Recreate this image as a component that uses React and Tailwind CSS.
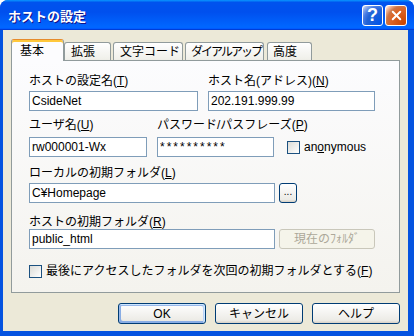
import { X } from "lucide-react";

const FONT = "font-['Liberation_Sans','Noto_Sans_CJK_JP',sans-serif]";

function Mn({ children }) {
  return <span className="underline underline-offset-[1px]">{children}</span>;
}

function TextBox({ value, className = "" }) {
  return (
    <input
      readOnly
      value={value}
      className={`h-[20px] border border-[#7f9db9] bg-white px-[2px] text-[12px] text-black outline-none ${className}`}
    />
  );
}

function CheckBox() {
  return (
    <span className="block h-[13px] w-[13px] shrink-0 border border-[#1c5180] bg-[linear-gradient(135deg,#dcdcd7,#ffffff)]" />
  );
}

function Tab({ label, active, className = "" }) {
  if (active) {
    return (
      <div
        className={`relative z-10 -mb-px flex h-[22px] items-center whitespace-nowrap rounded-t-[3px] border border-b-0 border-[#919b9c] border-t-[#e68b2c] bg-[#fcfcfe] pl-[8px] pt-[1px] text-[12px] shadow-[inset_0_2px_#ffc83c] ${className}`}
      >
        {label}
      </div>
    );
  }
  return (
    <div
      className={`flex h-[18px] items-center overflow-hidden whitespace-nowrap rounded-t-[3px] border border-b-0 border-[#919b9c] bg-[linear-gradient(180deg,#ffffff,#fafaf9_26%,#f0f0ea_95%,#ecebe6)] text-[12px] ${className}`}
    >
      {label}
    </div>
  );
}

function Button({ children, primary, className = "" }) {
  return (
    <button
      className={`flex h-[21px] w-[88px] items-center justify-center rounded-[3px] border border-[#003c74] bg-[linear-gradient(180deg,#ffffff,#ecebe6_86%,#d6d0c5)] text-[12px] text-black ${
        primary
          ? "shadow-[inset_-1px_1px_#cee7ff,inset_1px_2px_#98b8ea,inset_-2px_2px_#bcd4f6,inset_1px_-1px_#89ade4,inset_2px_-2px_#89ade4]"
          : ""
      } ${className}`}
    >
      {children}
    </button>
  );
}

export default function App() {
  return (
    <div className={`h-[336px] w-[414px] overflow-hidden bg-white ${FONT}`}>
      <div className="flex h-full flex-col overflow-hidden rounded-t-[8px] bg-[#0553e0]">
        {/* title bar */}
        <div className="flex h-[30px] shrink-0 items-center bg-[linear-gradient(180deg,#0997ff,#0053ee_8%,#0050ee_40%,#0066ff_88%,#0066ff_93%,#005bff_95%,#003dd7_96%,#003dd7)] pl-[8px] pr-[7px]">
          <span className="font-['Noto_Sans_CJK_JP',sans-serif] text-[13px] font-bold leading-none text-white [text-shadow:1px_1px_#0f1089]">
            ホストの設定
          </span>
          <div className="ml-auto flex gap-[2px]">
            <div className="flex h-[21px] w-[21px] items-center justify-center rounded-[3px] border border-white bg-[radial-gradient(circle_at_90%_90%,#0054e9_0%,#2263d5_55%,#4479e4_70%,#a3bbec_90%,#ffffff_100%)] font-['Liberation_Sans',sans-serif] text-[18px] font-bold leading-none text-white">
              ?
            </div>
            <div className="flex h-[21px] w-[22px] items-center justify-center rounded-[3px] border border-white bg-[radial-gradient(circle_at_90%_90%,#cc4600_0%,#dc6527_55%,#cd7546_70%,#ffccb2_90%,#ffffff_100%)]">
              <X className="h-[15px] w-[15px] text-white" strokeWidth={3.2} />
            </div>
          </div>
        </div>

        {/* frame */}
        <div className="flex flex-1 pb-[5px] pl-[3px] pr-[6px]">
          <div className="flex flex-1 flex-col bg-[#ece9d8] text-black">
            {/* tab strip */}
            <div className="flex h-[30px] shrink-0 items-end pl-[8px]">
              <Tab label="基本" active className="w-[53px]" />
              <Tab label="拡張" className="w-[47px] pl-[6px]" />
              <Tab label="文字コード" className="ml-[2px] w-[70px] pl-[6px]" />
              <Tab label="ダイアルアップ" className="ml-[2px] w-[79px] pl-[5px] tracking-[-2px]" />
              <Tab label="高度" className="ml-[3px] w-[45px] pl-[5px]" />
            </div>

            {/* tab page */}
            <div className="mx-[8px] h-[233px] shrink-0 border border-[#919b9c] bg-[linear-gradient(180deg,#fcfcfe,#f4f3ee)] pl-[17px] pt-[13px] text-[12px] leading-[14px]">
              <div className="flex gap-[10px]">
                <div className="flex w-[169px] flex-col">
                  <span className="whitespace-nowrap">
                    ホストの設定名(<Mn>T</Mn>)
                  </span>
                  <TextBox value="CsideNet" className="mt-[3px] w-full" />
                </div>
                <div className="flex w-[167px] flex-col">
                  <span className="whitespace-nowrap">
                    ホスト名(アドレス)(<Mn>N</Mn>)
                  </span>
                  <TextBox value="202.191.999.99" className="mt-[3px] w-full" />
                </div>
              </div>

              <div className="mt-[7px] flex">
                <div className="flex w-[118px] flex-col">
                  <span className="whitespace-nowrap">
                    ユーザ名(<Mn>U</Mn>)
                  </span>
                  <TextBox value="rw000001-Wx" className="mt-[5px] w-full" />
                </div>
                <div className="ml-[10px] flex w-[117px] flex-col">
                  <span className="whitespace-nowrap">
                    パスワード/パスフレーズ(<Mn>P</Mn>)
                  </span>
                  <TextBox value="**********" className="mt-[5px] w-full tracking-[2px]" />
                </div>
                <div className="ml-[13px] flex h-[20px] items-center self-end">
                  <CheckBox />
                  <span className="ml-[4px]">
                    an<Mn>o</Mn>nymous
                  </span>
                </div>
              </div>

              <div className="mt-[9px] flex flex-col">
                <span className="whitespace-nowrap">
                  ローカルの初期フォルダ(<Mn>L</Mn>)
                </span>
                <div className="mt-[3px] flex">
                  <TextBox value="C¥Homepage" className="w-[246px]" />
                  <button className="ml-[4px] flex h-[20px] w-[18px] items-center justify-center rounded-[3px] border border-[#003c74] bg-[linear-gradient(180deg,#ffffff,#ecebe6_86%,#d6d0c5)] pb-[3px] text-[10px] leading-none">
                    ...
                  </button>
                </div>
              </div>

              <div className="mt-[12px] flex flex-col">
                <span className="whitespace-nowrap">
                  ホストの初期フォルダ(<Mn>R</Mn>)
                </span>
                <div className="flex">
                  <TextBox value="public_html" className="w-[246px]" />
                  <button className="ml-[4px] flex h-[20px] w-[96px] items-center justify-center rounded-[3px] border border-[#c9c7ba] bg-[#f5f4ea] text-[12px] text-[#aca899]">
                    現在のﾌｫﾙﾀﾞ
                  </button>
                </div>
              </div>

              <div className="mt-[15px] flex items-center">
                <CheckBox />
                <span className="ml-[4px] whitespace-nowrap">
                  最後にアクセスしたフォルダを次回の初期フォルダとする(<Mn>F</Mn>)
                </span>
              </div>
            </div>

            {/* buttons */}
            <div className="mt-[10px] flex justify-end gap-[9px] pr-[8px]">
              <Button primary>OK</Button>
              <Button>キャンセル</Button>
              <Button>ヘルプ</Button>
            </div>
          </div>
        </div>
      </div>
    </div>
  );
}
